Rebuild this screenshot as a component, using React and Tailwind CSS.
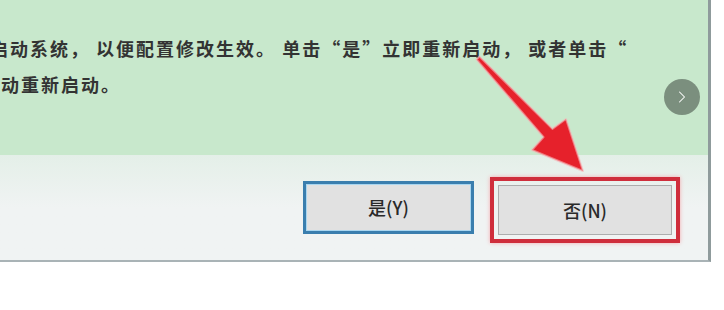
import { ChevronRight } from 'lucide-react';

const FONT = { fontFamily: '"Noto Sans CJK SC", "Noto Sans", sans-serif' };

function DialogButton({ label, className }) {
  return (
    <div className={`flex items-center justify-center bg-[#e1e1e1] text-[18px] font-medium text-[#2a2a2a] ${className}`}>
      {label}
    </div>
  );
}

export default function App() {
  return (
    <div className="relative w-[724px] h-[310px] overflow-hidden bg-white" style={FONT}>
      <div className="w-[711px] border-r-[3px] border-b-[2px] border-r-[#8f9b9c] border-b-[#a9b3b6]">
        {/* message area */}
        <div className="h-[155px] bg-[#c8e8cc] pt-[30px] text-[18px] leading-[36px] font-semibold text-[#333] overflow-hidden whitespace-nowrap">
          <p className="-ml-[10px] tracking-[2px]">启动系统，&nbsp;以便配置修改生效。&nbsp;单击“是”立即重新启动，&nbsp;或者单击“</p>
          <p className="-ml-[19px] tracking-[2px]">手动重新启动。</p>
        </div>

        {/* buttons */}
        <div className="h-[105px] bg-gradient-to-b from-[#e4efe8] via-[#f0f3f3] to-[#f0f3f3] flex items-start pt-[22px] pl-[303px] gap-[16px]">
          <DialogButton label="是(Y)" className="w-[171px] h-[53px] mt-[4px] border-[3px] border-[#3a7eae] shadow-[inset_0_0_0_1px_#a9d6f0]" />
          <div className="w-[190px] h-[66px] border-[4px] border-[#cf2e3c] shadow-[0_0_4px_#f5a7ad] p-[4px]">
            <DialogButton label="否(N)" className="w-full h-full border border-[#adadad]" />
          </div>
        </div>
      </div>

      {/* carousel next button */}
      <div className="absolute left-[664px] top-[79px] w-[36px] h-[36px] rounded-full bg-[#7b8f7e] flex items-center justify-center">
        <ChevronRight className="w-[20px] h-[20px] text-white" strokeWidth={1.25} />
      </div>

      {/* annotation arrow */}
      <svg className="absolute left-0 top-0 pointer-events-none" width="724" height="310">
        <polygon
          points="479.5,56.6 552.4,128.9 566,119 583,171 532,150 543.6,137.1 476.5,59.4"
          fill="#e6212b"
          stroke="#f7b3b6"
          strokeOpacity="0.6"
          strokeWidth="2"
          strokeLinejoin="round"
        />
      </svg>
    </div>
  );
}
